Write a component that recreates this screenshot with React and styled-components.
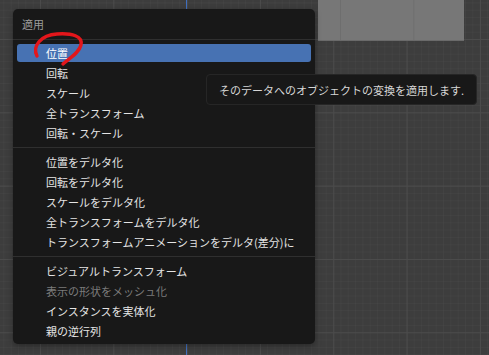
import styled, { createGlobalStyle } from "styled-components";

const GlobalStyle = createGlobalStyle`
  html, body {
    margin: 0;
    height: 100%;
    overflow: hidden;
  }
  body {
    font-family: "Noto Sans CJK JP", "Noto Sans", sans-serif;
    background-color: #3d3d3d;
    background-image:
      linear-gradient(90deg, #4b4b4b 1px, transparent 1px),
      linear-gradient(0deg, #4b4b4b 1px, transparent 1px),
      linear-gradient(90deg, rgba(255, 255, 255, 0.025) 1px, transparent 1px),
      linear-gradient(0deg, rgba(255, 255, 255, 0.025) 1px, transparent 1px);
    background-size: 73.33px 73.33px, 73.33px 73.33px, 7.333px 7.333px, 7.333px 7.333px;
    background-position: 40px 0, 0 40px, 40px 0, 0 40px;
  }
`;

const Viewport = styled.div`
  position: relative;
  width: 489px;
  height: 355px;
`;

// y axis line of the 3D view
const AxisLine = styled.div`
  position: absolute;
  left: 186px;
  top: 0;
  bottom: 0;
  width: 1px;
  background: #3f6fc0;
`;

const Plane = styled.div`
  position: absolute;
  left: 318px;
  top: 0;
  width: 146px;
  height: 40px;
  background-color: #777;
  background-image: linear-gradient(90deg, #6e6e6e 1px, transparent 1px);
  background-size: 73.33px 100%;
  background-position: 22px 0;
  border-bottom: 1px solid #6a6a6a;
`;

const Menu = styled.div`
  position: absolute;
  left: 13px;
  top: 9px;
  width: 302px;
  height: 335px;
  box-sizing: border-box;
  background: #181818;
  border-radius: 5px;
  box-shadow: 0 2px 6px rgba(0, 0, 0, 0.35);
  display: flex;
  flex-direction: column;
`;

const Title = styled.div`
  height: 30px;
  display: flex;
  align-items: center;
  padding-left: 9px;
  font-size: 11px;
  color: #9c9c9c;
  border-bottom: 1px solid #2f2f2f;
`;

const List = styled.div`
  padding: 3px 4px 0;
  display: flex;
  flex-direction: column;
`;

const Group = styled.div`
  display: flex;
  flex-direction: column;
  gap: 2px;
  padding: 1px 0;
`;

const Item = styled.div`
  height: 18px;
  display: flex;
  align-items: center;
  padding-left: 29px;
  font-size: 11px;
  white-space: nowrap;
  border-radius: 3px;
  color: ${(p) => (p.$disabled ? "#7b7b7b" : p.$active ? "#ffffff" : "#e4e4e4")};
  background: ${(p) => (p.$active ? "#4772b3" : "transparent")};
`;

const Separator = styled.div`
  height: 1px;
  margin: 4px -4px;
  background: #2f2f2f;
`;

const Tooltip = styled.div`
  position: absolute;
  left: 206px;
  top: 74px;
  width: 271px;
  height: 31px;
  box-sizing: border-box;
  background: #181818;
  border: 1px solid #262626;
  border-radius: 4px;
  display: flex;
  align-items: center;
  padding-left: 12px;
  font-size: 11px;
  color: #d6d6d6;
  white-space: nowrap;
`;

const Marker = styled.svg`
  position: absolute;
  left: 0;
  top: 0;
  pointer-events: none;
`;

const groups = [
  ["位置", "回転", "スケール", "全トランスフォーム", "回転・スケール"],
  [
    "位置をデルタ化",
    "回転をデルタ化",
    "スケールをデルタ化",
    "全トランスフォームをデルタ化",
    "トランスフォームアニメーションをデルタ(差分)に",
  ],
  ["ビジュアルトランスフォーム", "表示の形状をメッシュ化", "インスタンスを実体化", "親の逆行列"],
];

export default function App() {
  return (
    <>
      <GlobalStyle />
      <Viewport>
        <AxisLine />
        <Plane />
        <Menu>
          <Title>適用</Title>
          <List>
            {groups.map((g, gi) => (
              <div key={gi}>
                {gi > 0 && <Separator />}
                <Group>
                  {g.map((label) => (
                    <Item
                      key={label}
                      $active={label === "位置"}
                      $disabled={label === "表示の形状をメッシュ化"}
                    >
                      {label}
                    </Item>
                  ))}
                </Group>
              </div>
            ))}
          </List>
        </Menu>
        <Tooltip>そのデータへのオブジェクトの変換を適用します.</Tooltip>
        <Marker width="489" height="355">
          <path
            d="M37 56 C 32 46, 41 35, 57 34 C 72 33, 83 36, 81 45 C 79 53, 70 58, 63 64"
            fill="none"
            stroke="#e3161b"
            strokeWidth="3.4"
            strokeLinecap="round"
          />
        </Marker>
      </Viewport>
    </>
  );
}
